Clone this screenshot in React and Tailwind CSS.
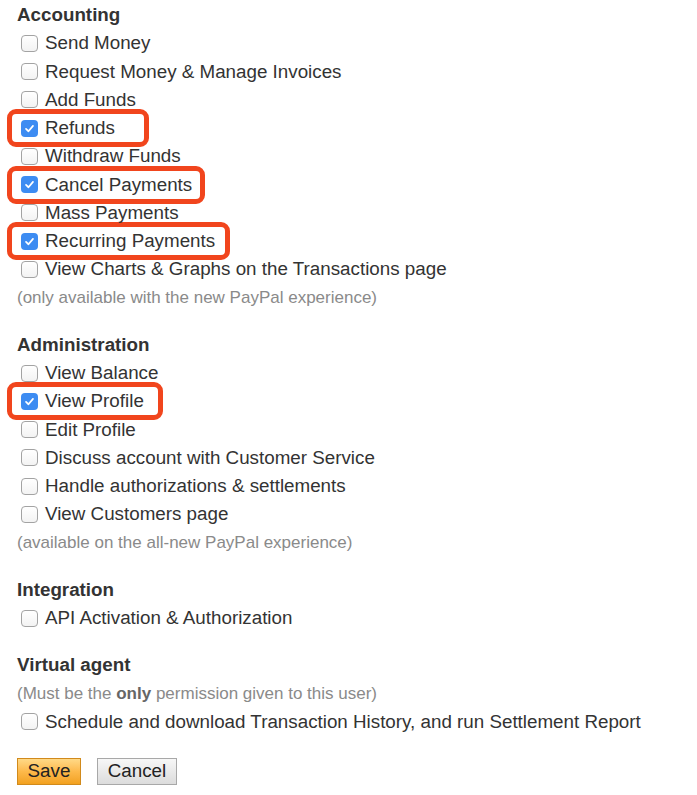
import React from "react";

function Box({ checked }) {
  if (checked) {
    return (
      <span className="flex h-[17px] w-[17px] shrink-0 items-center justify-center rounded-[4px] bg-[#3d8cf2]">
        <svg width="11" height="11" viewBox="0 0 12 12" fill="none">
          <path d="M2.2 6.4 L4.9 9 L9.8 3.2" stroke="white" strokeWidth="1.9" strokeLinecap="round" strokeLinejoin="round" />
        </svg>
      </span>
    );
  }
  return (
    <span className="block h-[17px] w-[17px] shrink-0 rounded-[4px] border border-[#a3a3a3] bg-gradient-to-b from-white to-[#f3f3f3]" />
  );
}

function Row({ label, checked, hl }) {
  return (
    <div className="relative flex h-[28.25px] items-center">
      {hl ? (
        <div
          className="absolute left-[-10px] top-[-5px] z-10 h-[38px] rounded-[9px] border-[5px] border-[#f1451d] bg-white"
          style={{ width: hl }}
        />
      ) : null}
      <div className="relative z-20 flex items-center">
        <span className="ml-[4px] mr-[7px]">
          <Box checked={checked} />
        </span>
        <span className="whitespace-nowrap">{label}</span>
      </div>
    </div>
  );
}

function Heading({ children }) {
  return <div className="flex h-[28.25px] items-center font-bold text-[#333]">{children}</div>;
}

function Note({ children }) {
  return (
    <div className="flex h-[28.25px] items-center text-[17px] text-[#8a8a8a] whitespace-nowrap">{children}</div>
  );
}

export default function App() {
  return (
    <div
      className="min-h-[795px] w-[697px] bg-white pl-[17px] pt-[1px] text-[18.8px] text-[#333]"
      style={{ fontFamily: '"Liberation Sans", Arial, sans-serif' }}
    >
      <section>
        <Heading>Accounting</Heading>
        <Row label="Send Money" />
        <Row label="Request Money & Manage Invoices" />
        <Row label="Add Funds" />
        <Row label="Refunds" checked hl={142} />
        <Row label="Withdraw Funds" />
        <Row label="Cancel Payments" checked hl={198} />
        <Row label="Mass Payments" />
        <Row label="Recurring Payments" checked hl={223} />
        <Row label="View Charts & Graphs on the Transactions page" />
        <Note>(only available with the new PayPal experience)</Note>
      </section>
      <section className="mt-[19px]">
        <Heading>Administration</Heading>
        <Row label="View Balance" />
        <Row label="View Profile" checked hl={156} />
        <Row label="Edit Profile" />
        <Row label="Discuss account with Customer Service" />
        <Row label="Handle authorizations & settlements" />
        <Row label="View Customers page" />
        <Note>(available on the all-new PayPal experience)</Note>
      </section>
      <section className="mt-[19px]">
        <Heading>Integration</Heading>
        <Row label="API Activation & Authorization" />
      </section>
      <section className="mt-[19px]">
        <Heading>Virtual agent</Heading>
        <Note>
          <span>
            (Must be the <b className="font-bold text-[#666]">only</b> permission given to this user)
          </span>
        </Note>
        <Row label="Schedule and download Transaction History, and run Settlement Report" />
      </section>
      <div className="mt-[22px] flex gap-[16px]">
        <button className="flex h-[27px] w-[64px] items-center justify-center border border-[#d18a1c] bg-gradient-to-b from-[#ffd986] via-[#fdb94a] to-[#f2a11d] text-[#222]">
          Save
        </button>
        <button className="flex h-[27px] w-[80px] items-center justify-center border border-[#a8a8a8] bg-gradient-to-b from-[#f7f7f7] to-[#dcdcdc] text-[#222]">
          Cancel
        </button>
      </div>
    </div>
  );
}
